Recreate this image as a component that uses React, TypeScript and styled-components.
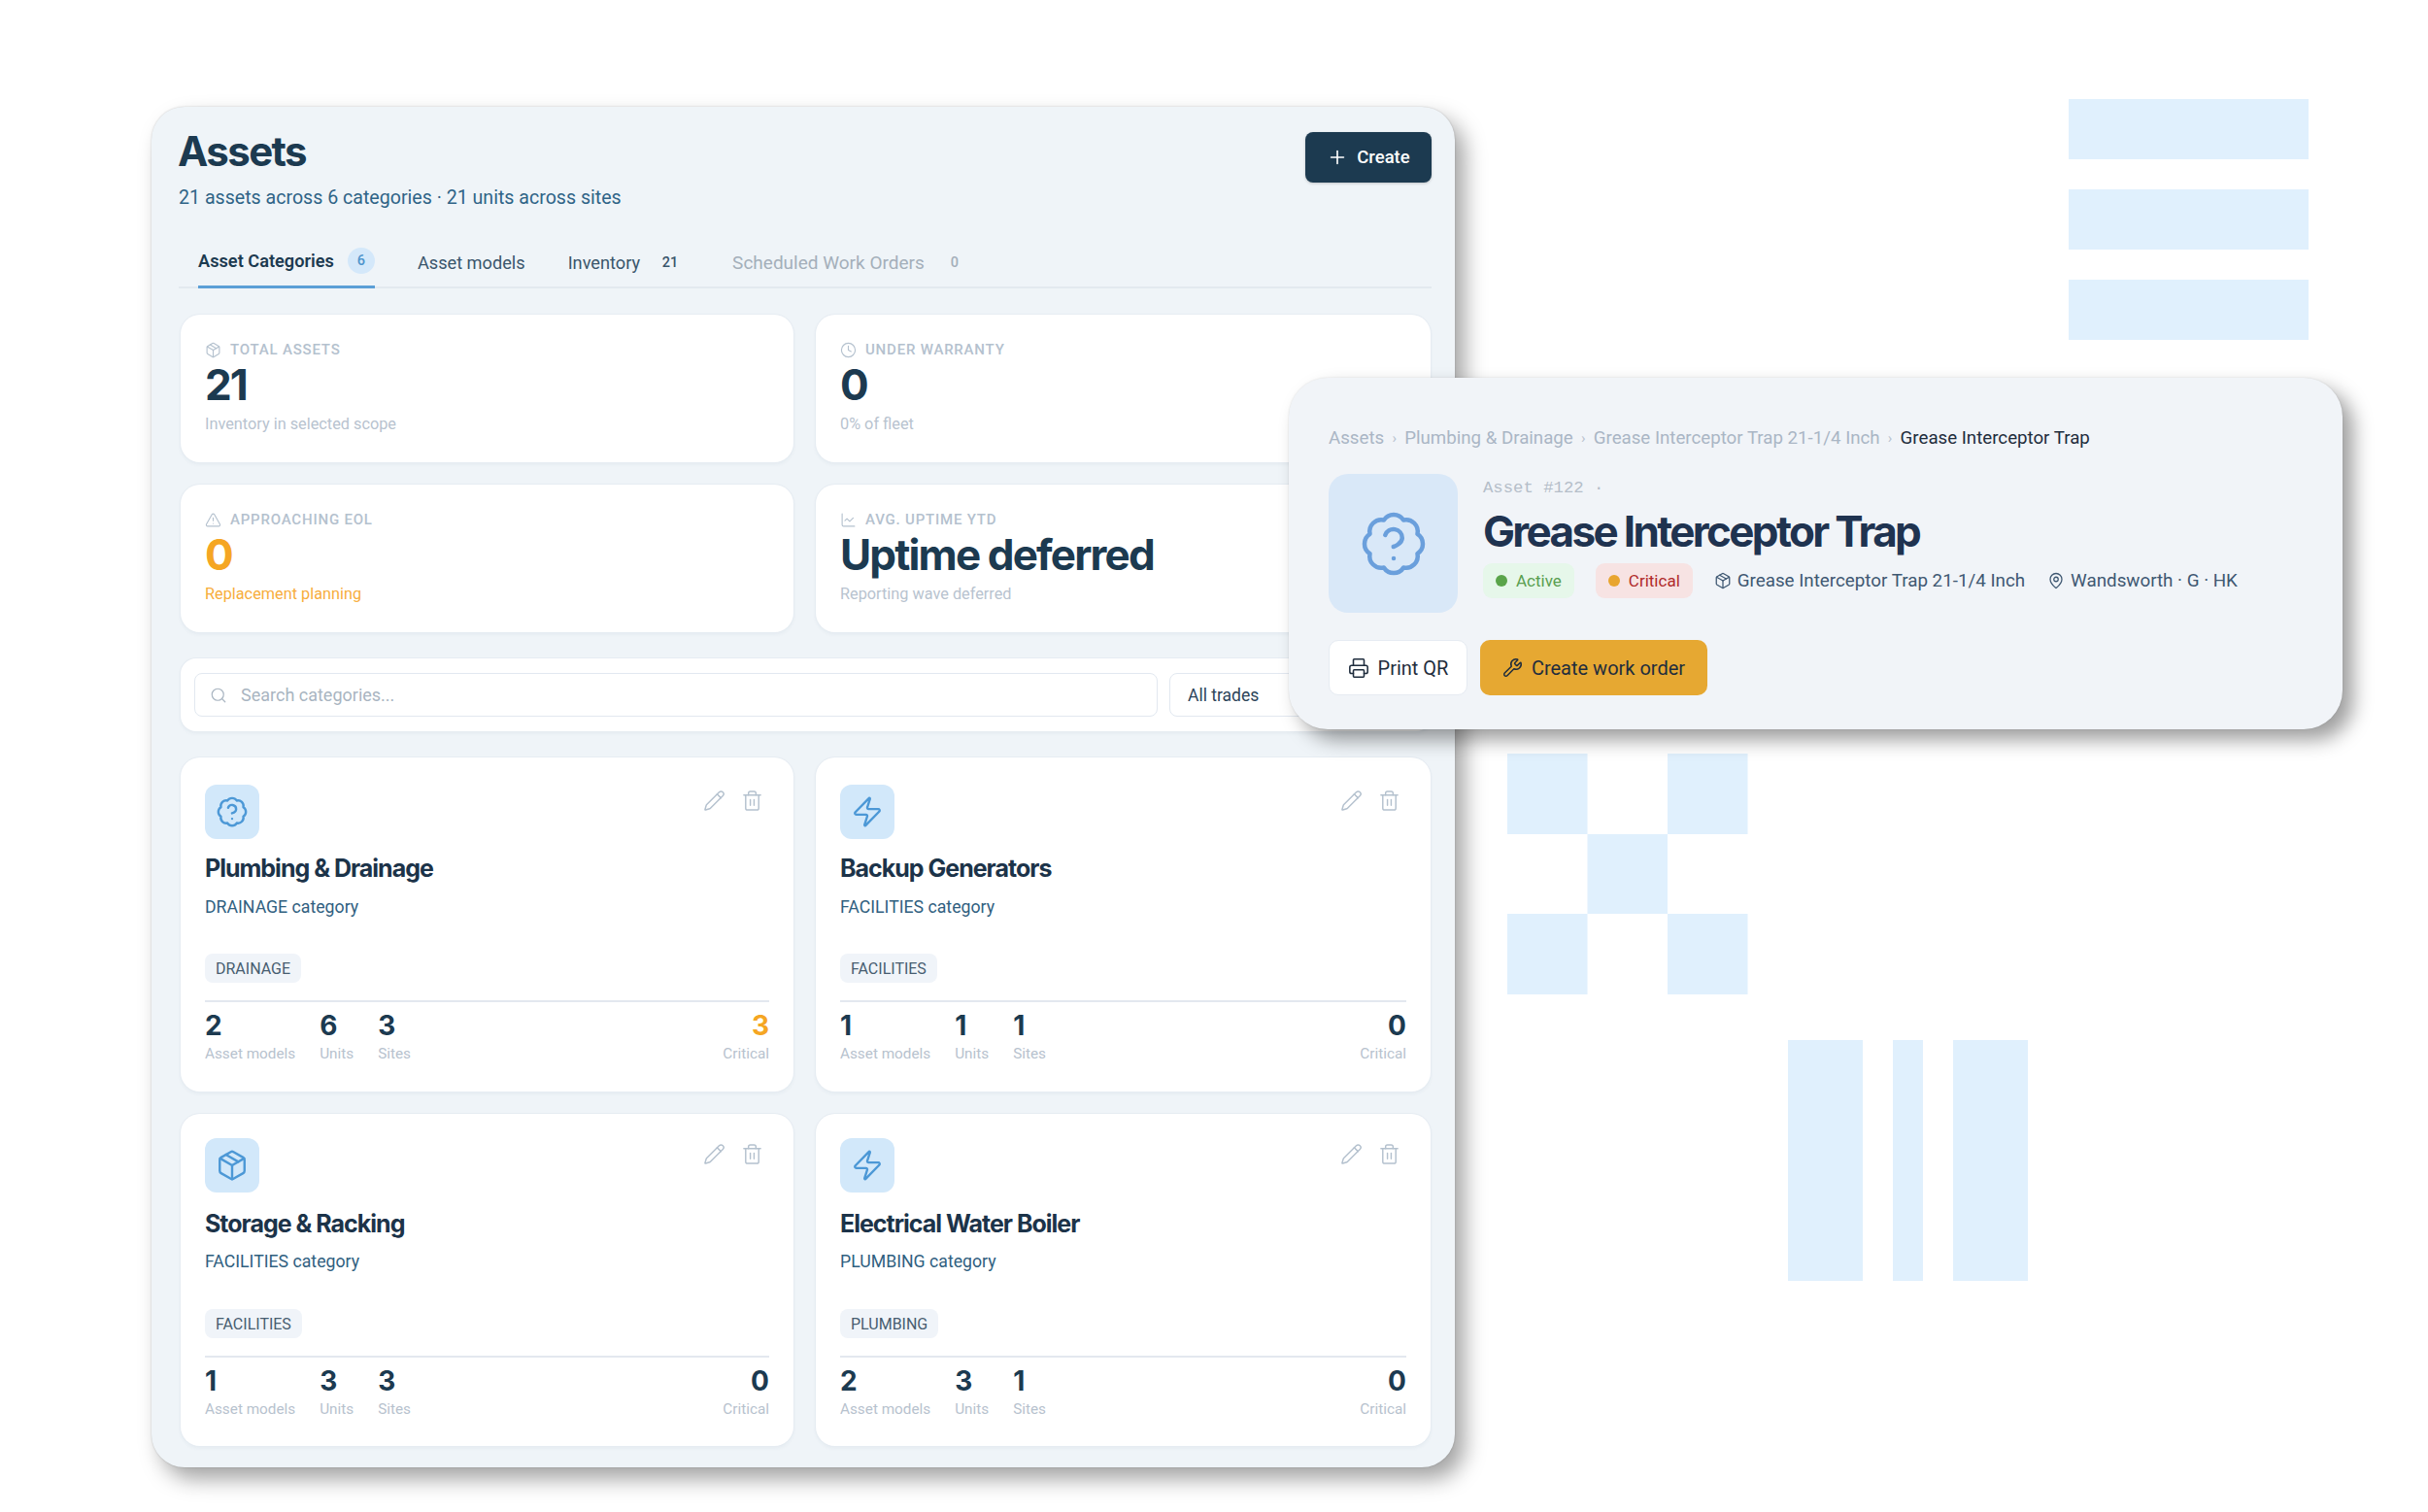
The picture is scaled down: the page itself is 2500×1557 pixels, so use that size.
import React from 'react';
import styled, { createGlobalStyle } from 'styled-components';
import { BadgeHelp, ChartLine, Clock, MapPin, Package, Pencil, Plus, Printer, Search, Trash2, TriangleAlert, Wrench, Zap } from 'lucide-react';

const GlobalStyle = createGlobalStyle`
  html, body { margin: 0; padding: 0; background: #fff; }
  * { box-sizing: border-box; }
  body { font-family: Roboto, "Liberation Sans", sans-serif; }
`;
const HEAD = `Inter, "Liberation Sans", sans-serif`;

const Canvas = styled.div`position: relative; width: 2500px; height: 1557px; overflow: hidden; background: #fff;`;
const Decor = styled.svg`position: absolute; inset: 0; width: 2500px; height: 1557px; fill: #e0f0fd;`;

const Panel = styled.section`
  position: absolute; left: 156px; top: 110px; width: 1342px; height: 1401px;
  padding: 26px 24px 0 28px; background: #eff4f8; border-radius: 34px;
  box-shadow: 10px 12px 22px rgba(0,0,0,.36), 0 0 2px rgba(0,0,0,.2);
`;
const Header = styled.header`display: flex; justify-content: space-between; align-items: flex-start; height: 79px;`;
const TitleBlock = styled.div`margin: -2px 0 0 -1px;`;
const Title = styled.h1`margin: 0; font: 700 42px/44px ${HEAD}; letter-spacing: -1.6px; color: #1c3a50;`;
const Subtitle = styled.p`margin: 14px 0 0 1px; font: 400 19.6px/24px Roboto, sans-serif; color: #2f6487;`;
const CreateButton = styled.button`
  display: flex; align-items: center; justify-content: center; gap: 9px; width: 130px; height: 52px;
  border: 0; border-radius: 8px; background: #1c3a50; color: #fff; font: 500 18.5px Roboto, sans-serif;
  box-shadow: 0 1px 3px rgba(0,0,0,.2);
`;
const Tabs = styled.nav`display: flex; gap: 44px; height: 54px; margin-top: 28px; padding-left: 20px; border-bottom: 2px solid #e3e9ef;`;
const Tab = styled.div<{ $active?: boolean; $muted?: boolean }>`
  display: flex; align-items: center; gap: 14px; height: 54px;
  font: ${p => (p.$active ? 600 : 400)} ${p => (p.$muted ? 19 : 18.2)}px Roboto, sans-serif;
  color: ${p => (p.$active ? '#1c3a50' : p.$muted ? '#a4afba' : '#3a566c')};
  border-bottom: ${p => (p.$active ? '3px solid #5b9fd6' : '0')};
`;
const Count = styled.span<{ $active?: boolean; $muted?: boolean }>`
  display: flex; align-items: center; justify-content: center; width: 28px; height: 27px; border-radius: 50%;
  font: 500 14.5px Roboto, sans-serif;
  margin: 0 ${p => (p.$active ? 0 : 6)}px 0 ${p => (p.$active ? 0 : 3)}px;
  color: ${p => (p.$active ? '#4f94cc' : p.$muted ? '#a4afba' : '#3a566c')};
  background: ${p => (p.$active ? '#d4e8fa' : 'transparent')};
`;
const StatGrid = styled.div`display: grid; grid-template-columns: 631px 633px; grid-auto-rows: 152px; gap: 23px; margin: 27px 0 0 2px;`;
const Card = styled.article`background: #fff; border-radius: 20px; box-shadow: 0 0 0 1px #e6ecf2, 0 2px 4px rgba(40,70,100,.06);`;
const StatCard = styled(Card)`padding: 26px 25px 0;`;
const StatLabel = styled.div`
  display: flex; align-items: center; gap: 9px; height: 20px;
  font: 500 15px Roboto, sans-serif; letter-spacing: .8px; text-transform: uppercase; color: #b4c1ce;
`;
const StatValue = styled.div<{ $warn?: boolean }>`
  margin-top: 4px; font: 700 44px/44px ${HEAD}; letter-spacing: -1.85px; color: ${p => (p.$warn ? '#f5a623' : '#1c3a50')};
`;
const StatSub = styled.div<{ $warn?: boolean }>`margin-top: 9px; font: 400 16.3px/20px Roboto, sans-serif; color: ${p => (p.$warn ? '#f7ad3c' : '#b8c3cf')};`;
const FilterBar = styled(Card)`display: flex; gap: 12px; height: 75px; margin: 27px 0 0 2px; padding: 15px 14px; border-radius: 16px;`;
const SearchBox = styled.div`
  display: flex; align-items: center; gap: 14px; width: 992px; height: 45px; padding-left: 15px;
  border: 1.5px solid #e2e8f0; border-radius: 8px; font: 400 18px Roboto, sans-serif; color: #a9b5c1;
`;
const SelectBox = styled.div`
  display: flex; align-items: center; width: 170px; height: 45px; padding-left: 18px;
  border: 1.5px solid #e2e8f0; border-radius: 8px; font: 400 17.5px Roboto, sans-serif; color: #2c4459;
`;
const CategoryGrid = styled.div`display: grid; grid-template-columns: 631px 633px; grid-template-rows: 344px 342px; gap: 23px; margin: 27px 0 0 2px;`;
const CategoryCard = styled(Card)<{ $tight?: boolean }>`padding: ${p => (p.$tight ? 25 : 28)}px 25px 0;`;
const CardTop = styled.div`display: flex; justify-content: space-between; align-items: flex-start;`;
const CategoryIcon = styled.div`
  display: flex; align-items: center; justify-content: center; width: 56px; height: 56px;
  border-radius: 12px; background: #d2e8fa; color: #4c98d6;
`;
const Actions = styled.div`display: flex; gap: 16px; margin: 5px 6px 0 0; color: #b4c1ce;`;
const CategoryTitle = styled.h2<{ $tight?: boolean }>`
  margin: ${p => (p.$tight ? 16 : 14)}px 0 0; font: 700 25px/32px ${HEAD}; letter-spacing: -1px; color: #1c3349;
`;
const CategorySub = styled.p<{ $tight?: boolean }>`margin: ${p => (p.$tight ? 12 : 13)}px 0 0; font: 400 17.7px/22px Roboto, sans-serif; color: #30607f;`;
const Tag = styled.span<{ $tight?: boolean }>`
  display: inline-flex; align-items: center; height: 30px; margin-top: ${p => (p.$tight ? 38 : 37)}px; padding: 0 11px;
  border-radius: 8px; background: #f0f4f9; font: 400 16px Roboto, sans-serif; color: #475d70;
`;
const Metrics = styled.div`display: flex; gap: 25px; margin-top: 18px; padding-top: 10px; border-top: 2px solid #e3e8ef;`;
const Metric = styled.div<{ $right?: boolean }>`
  margin-left: ${p => (p.$right ? 'auto' : 0)}; text-align: ${p => (p.$right ? 'right' : 'left')};
`;
const MetricValue = styled.div<{ $warn?: boolean }>`font: 700 28px/28px ${HEAD}; color: ${p => (p.$warn ? '#f5a623' : '#1c3a50')};`;
const MetricLabel = styled.div`margin-top: 5px; font: 400 15.3px/20px Roboto, sans-serif; color: #b7c2ce;`;

const Overlay = styled.section`
  position: absolute; left: 1327px; top: 389px; width: 1085px; height: 362px;
  padding: 50px 0 0 41px; background: #f1f4f8; border-radius: 40px;
  box-shadow: 11px 11px 20px rgba(0,0,0,.38), 0 0 2px rgba(0,0,0,.12);
`;
const Crumbs = styled.nav`display: flex; align-items: center; height: 24px; font: 400 18.7px/24px Roboto, sans-serif; color: #aab6c5;`;
const Sep = styled.span`width: 21px; text-align: center; font-size: 15px; color: #b8c2ce;`;
const CrumbLast = styled.span`color: #1f2d3d;`;
const HeroRow = styled.div`display: flex; gap: 26px; margin-top: 25px;`;
const HeroIcon = styled.div`
  display: flex; align-items: center; justify-content: center; width: 133px; height: 143px;
  border-radius: 20px; background: #d9e8f8; color: #6a9fdc;
`;
const HeroBody = styled.div`padding-top: 5px;`;
const AssetNo = styled.div`font: 400 17.3px/20px "Liberation Mono", monospace; color: #b5bec9; white-space: pre;`;
const HeroTitle = styled.h2`margin: 8px 0 0; font: 700 44px/52px ${HEAD}; letter-spacing: -2.65px; color: #1f3350;`;
const MetaRow = styled.div`display: flex; align-items: center; margin-top: 7px;`;
const Pill = styled.span<{ $tone: 'green' | 'red' }>`
  display: flex; align-items: center; gap: 9px; height: 36px; padding: 0 13px; margin-right: 22px;
  border-radius: 9px; font: 400 17px Roboto, sans-serif;
  background: ${p => (p.$tone === 'green' ? '#e6f7ea' : '#f7e3e3')};
  color: ${p => (p.$tone === 'green' ? '#5a9e50' : '#b02a2a')};
`;
const Dot = styled.i<{ $tone: 'green' | 'red' }>`
  width: 12px; height: 12px; border-radius: 50%; background: ${p => (p.$tone === 'green' ? '#5aa44a' : '#e8a52f')};
`;
const MetaItem = styled.span`display: flex; align-items: center; gap: 6px; margin-right: 23px; font: 400 18.8px Roboto, sans-serif; color: #3f5872;`;
const HeroActions = styled.div`display: flex; gap: 13px; margin-top: 28px;`;
const ActionButton = styled.button<{ $primary?: boolean }>`
  display: flex; align-items: center; justify-content: center; gap: 9px; height: 57px;
  width: ${p => (p.$primary ? 234 : 143)}px;
  border: ${p => (p.$primary ? '0' : '1.5px solid #e6ebf2')}; border-radius: 10px;
  background: ${p => (p.$primary ? '#e6a832' : '#fff')}; color: #1f2d3d; font: 400 20px Roboto, sans-serif;
`;

type Cat = { name: string; kind: string; Icon: React.ComponentType<any>; models: number; units: number; sites: number; critical: number };
const cats: Cat[] = [
  { name: 'Plumbing & Drainage', kind: 'DRAINAGE', Icon: BadgeHelp, models: 2, units: 6, sites: 3, critical: 3 },
  { name: 'Backup Generators', kind: 'FACILITIES', Icon: Zap, models: 1, units: 1, sites: 1, critical: 0 },
  { name: 'Storage & Racking', kind: 'FACILITIES', Icon: Package, models: 1, units: 3, sites: 3, critical: 0 },
  { name: 'Electrical Water Boiler', kind: 'PLUMBING', Icon: Zap, models: 2, units: 3, sites: 1, critical: 0 },
];

function Stat({ icon: Icon, label, value, sub, warn }: { icon: React.ComponentType<any>; label: string; value: string; sub: string; warn?: boolean }) {
  return (
    <StatCard>
      <StatLabel><Icon size={17} strokeWidth={1.6} />{label}</StatLabel>
      <StatValue $warn={warn}>{value}</StatValue>
      <StatSub $warn={warn}>{sub}</StatSub>
    </StatCard>
  );
}

export default function App() {
  return (
    <Canvas>
      <GlobalStyle />
      <Decor viewBox="0 0 2500 1557">
        <rect x="2130" y="102" width="247" height="62" />
        <rect x="2130" y="195" width="247" height="62" />
        <rect x="2130" y="288" width="247" height="62" />
        <rect x="1552" y="776" width="82.5" height="83" />
        <rect x="1717" y="776" width="82.5" height="83" />
        <rect x="1634.5" y="859" width="82.5" height="82" />
        <rect x="1552" y="941" width="82.5" height="83" />
        <rect x="1717" y="941" width="82.5" height="83" />
        <rect x="1841" y="1071" width="77" height="248" />
        <rect x="1949" y="1071" width="31" height="248" />
        <rect x="2011" y="1071" width="77" height="248" />
      </Decor>
      <Panel>
        <Header>
          <TitleBlock>
            <Title>Assets</Title>
            <Subtitle>21 assets across 6 categories · 21 units across sites</Subtitle>
          </TitleBlock>
          <CreateButton><Plus size={22} strokeWidth={1.8} />Create</CreateButton>
        </Header>
        <Tabs>
          <Tab $active>Asset Categories<Count $active>6</Count></Tab>
          <Tab>Asset models</Tab>
          <Tab>Inventory<Count>21</Count></Tab>
          <Tab $muted>Scheduled Work Orders<Count $muted>0</Count></Tab>
        </Tabs>
        <StatGrid>
          <Stat icon={Package} label="Total assets" value="21" sub="Inventory in selected scope" />
          <Stat icon={Clock} label="Under warranty" value="0" sub="0% of fleet" />
          <Stat icon={TriangleAlert} label="Approaching EOL" value="0" sub="Replacement planning" warn />
          <Stat icon={ChartLine} label="Avg. uptime YTD" value="Uptime deferred" sub="Reporting wave deferred" />
        </StatGrid>
        <FilterBar>
          <SearchBox><Search size={18} strokeWidth={1.6} />Search categories...</SearchBox>
          <SelectBox>All trades</SelectBox>
        </FilterBar>
        <CategoryGrid>
          {cats.map((c, i) => (
            <CategoryCard key={c.name} $tight={i > 1}>
              <CardTop>
                <CategoryIcon><c.Icon size={34} strokeWidth={1.7} /></CategoryIcon>
                <Actions><Pencil size={23} strokeWidth={1.5} /><Trash2 size={23} strokeWidth={1.5} /></Actions>
              </CardTop>
              <CategoryTitle $tight={i > 1}>{c.name}</CategoryTitle>
              <CategorySub $tight={i > 1}>{c.kind} category</CategorySub>
              <Tag $tight={i > 1}>{c.kind}</Tag>
              <Metrics>
                <Metric><MetricValue>{c.models}</MetricValue><MetricLabel>Asset models</MetricLabel></Metric>
                <Metric><MetricValue>{c.units}</MetricValue><MetricLabel>Units</MetricLabel></Metric>
                <Metric><MetricValue>{c.sites}</MetricValue><MetricLabel>Sites</MetricLabel></Metric>
                <Metric $right><MetricValue $warn={c.critical > 0}>{c.critical}</MetricValue><MetricLabel>Critical</MetricLabel></Metric>
              </Metrics>
            </CategoryCard>
          ))}
        </CategoryGrid>
      </Panel>
      <Overlay>
        <Crumbs>
          Assets<Sep>›</Sep>Plumbing &amp; Drainage<Sep>›</Sep>Grease Interceptor Trap 21-1/4 Inch<Sep>›</Sep>
          <CrumbLast>Grease Interceptor Trap</CrumbLast>
        </Crumbs>
        <HeroRow>
          <HeroIcon><BadgeHelp size={72} strokeWidth={1.5} /></HeroIcon>
          <HeroBody>
            <AssetNo>Asset #122 ·</AssetNo>
            <HeroTitle>Grease Interceptor Trap</HeroTitle>
            <MetaRow>
              <Pill $tone="green"><Dot $tone="green" />Active</Pill>
              <Pill $tone="red"><Dot $tone="red" />Critical</Pill>
              <MetaItem><Package size={18} strokeWidth={1.7} />Grease Interceptor Trap 21-1/4 Inch</MetaItem>
              <MetaItem><MapPin size={18} strokeWidth={1.7} />Wandsworth · G · HK</MetaItem>
            </MetaRow>
          </HeroBody>
        </HeroRow>
        <HeroActions>
          <ActionButton><Printer size={22} strokeWidth={1.7} />Print QR</ActionButton>
          <ActionButton $primary><Wrench size={21} strokeWidth={1.7} />Create work order</ActionButton>
        </HeroActions>
      </Overlay>
    </Canvas>
  );
}
